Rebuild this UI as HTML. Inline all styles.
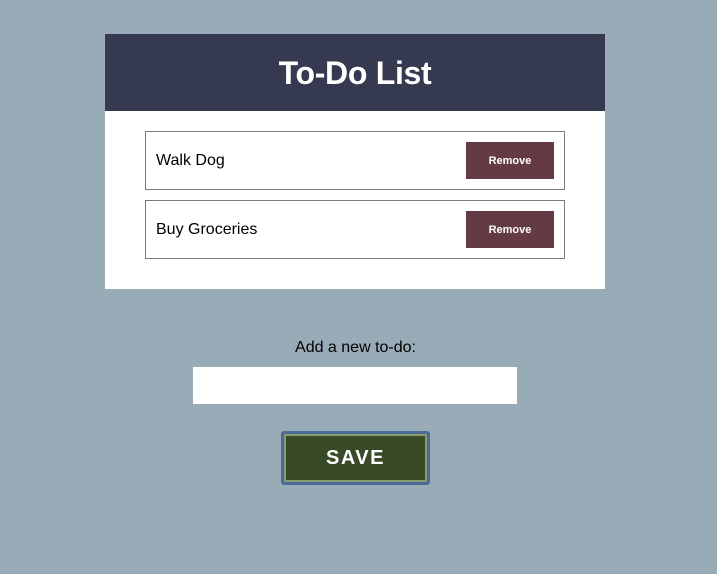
<!DOCTYPE html>
<html><head><style>
*{margin:0;padding:0;box-sizing:border-box}
body{width:717px;height:574px;background:#9aabb8;font-family:"Liberation Sans",sans-serif;position:relative;overflow:hidden}
.card{position:absolute;left:105px;top:34px;width:500px;height:255px;background:#fff}
.hd{height:77px;background:#363a50;color:#fff;font-weight:bold;font-size:32px;text-align:center;line-height:78px;letter-spacing:-0.3px}
.item{position:absolute;left:40px;width:420px;height:59px;border:1px solid #7a7a7a;font-size:16px;color:#000}
.item span{position:absolute;left:10px;top:20px}
.item b{position:absolute;left:320px;top:10px;width:88px;height:37px;background:#643a45;color:#fff;font-size:11px;text-align:center;line-height:39px}
.lbl{position:absolute;left:-3px;width:717px;top:339px;text-align:center;font-size:16px}
.inp{position:absolute;left:193px;top:367px;width:324px;height:37px;background:#fff}
.save{position:absolute;left:281px;top:431px;width:149px;height:54px;border:3px solid #4a6a9a;border-radius:3px;background:#8a9a70;padding:2px}
.save div{width:100%;height:100%;background:#394a27;color:#fff;font-weight:bold;font-size:20px;letter-spacing:1.5px;text-align:center;line-height:44px}
</style></head><body>
<div class="card"><div class="hd">To-Do List</div>
<div class="item" style="top:97px"><span>Walk Dog</span><b>Remove</b></div>
<div class="item" style="top:166px"><span>Buy Groceries</span><b>Remove</b></div>
</div>
<div class="lbl">Add a new to-do:</div>
<div class="inp"></div>
<div class="save"><div>SAVE</div></div>
</body></html>
